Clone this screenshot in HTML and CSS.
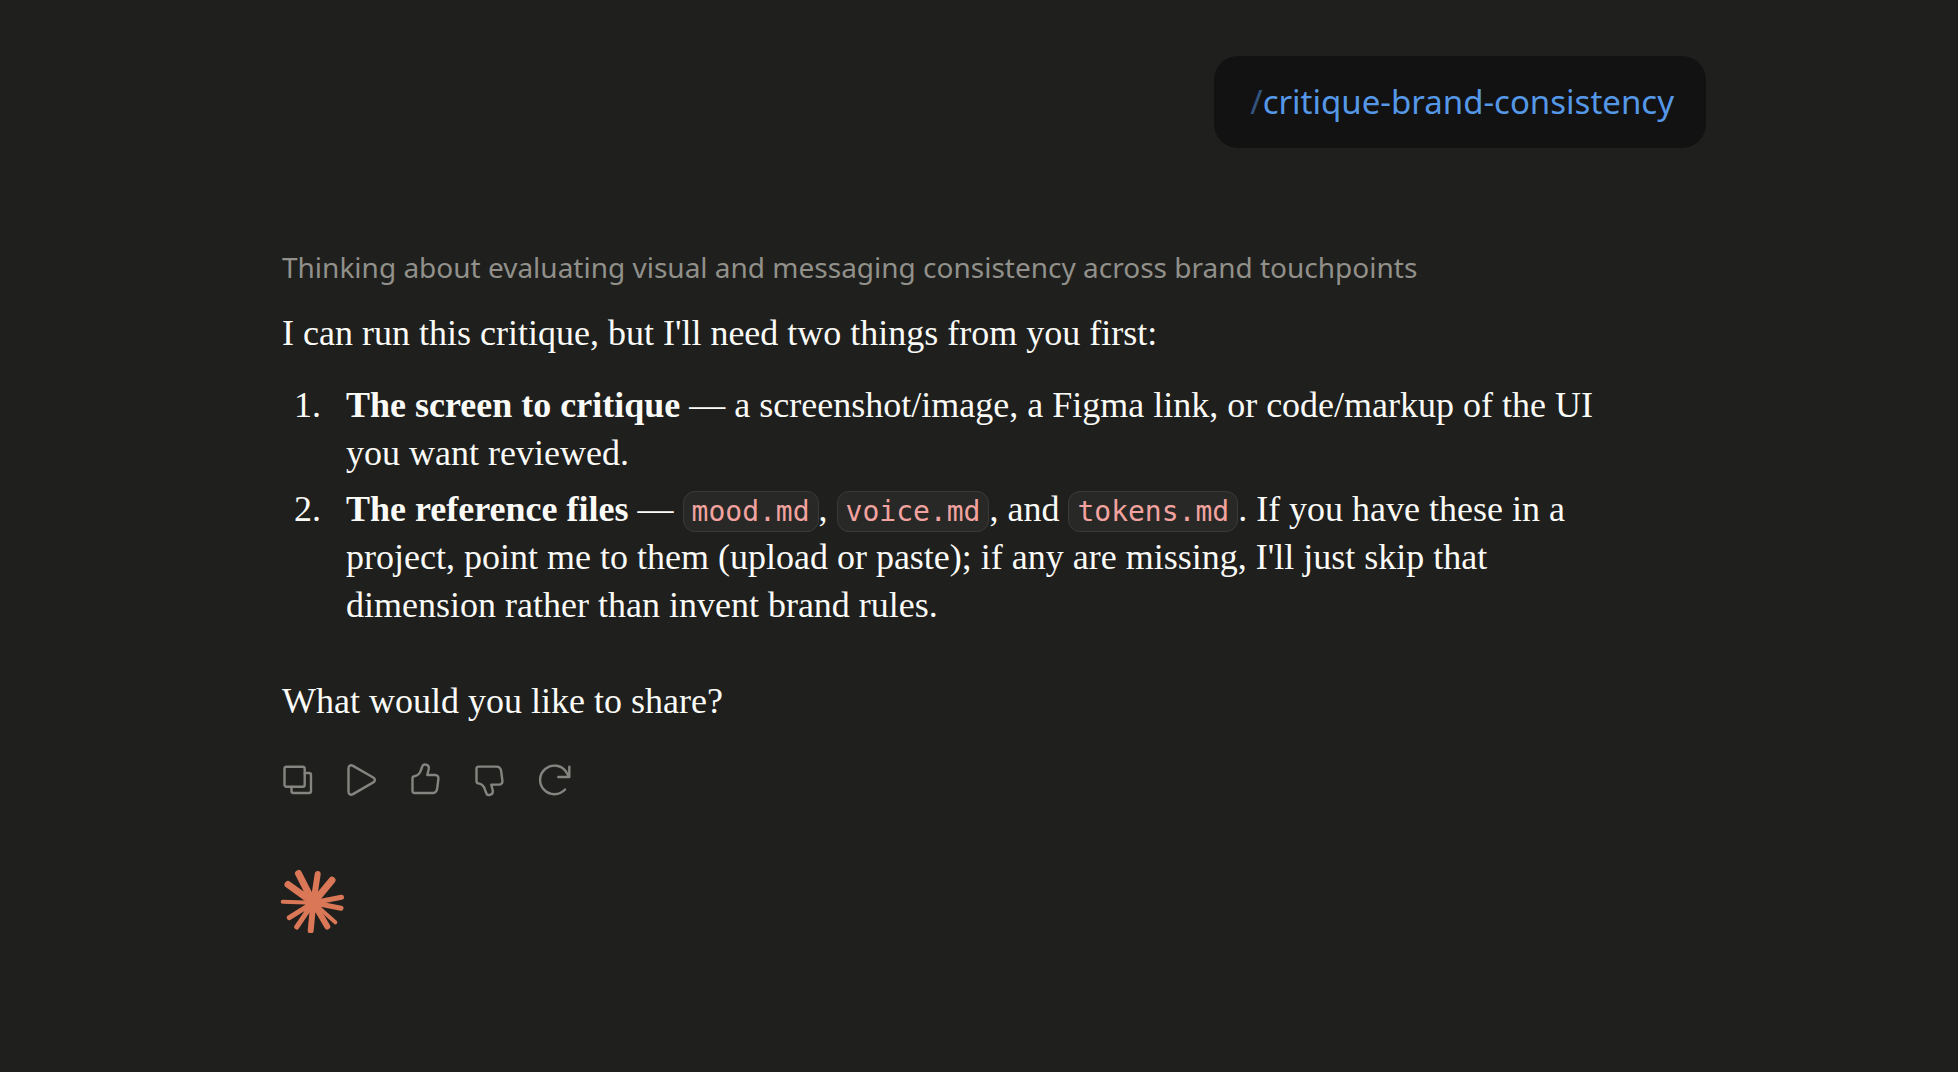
FILE: index.html
```
<!DOCTYPE html>
<html lang="en">

<head>
    <meta charset="UTF-8">
    <meta name="viewport" content="width=device-width, initial-scale=1.0">
    <title>Critique brand consistency</title>
    <link rel="stylesheet" href="styles.css">
</head>

<body>
    <main class="chat">
        <div class="user-message"><span class="slash">/</span>critique-brand-consistency</div>

        <p class="thinking">Thinking about evaluating visual and messaging consistency across brand touchpoints</p>

        <div class="answer">
            <p>I can run this critique, but I'll need two things from you first:</p>
            <ol>
                <li><strong>The screen to critique</strong> — a screenshot/image, a Figma link, or code/markup of the UI you want reviewed.</li>
                <li><strong>The reference files</strong> — <code>mood.md</code>, <code>voice.md</code>, and <code>tokens.md</code>. If you have these in a project, point me to them (upload or paste); if any are missing, I'll just skip that dimension rather than invent brand rules.</li>
            </ol>
            <p>What would you like to share?</p>
        </div>

        <div class="actions">
            <button class="action" aria-label="Copy">
                <svg viewBox="0 0 32 32"><rect x="2.500" y="3.700" width="20.200" height="20" rx="2"/><path d="M22.700 10H27a2 2 0 0 1 2 2v16a2 2 0 0 1-2 2H11.500a2 2 0 0 1-2-2v-4.300"/></svg>
            </button>
            <button class="action" aria-label="Read aloud">
                <svg viewBox="0 0 32 32"><path d="M2.500 5.300v23.400c0 2.600 2.300 3.700 4.500 2.400l20.300-11.700c2.100-1.200 2.100-3.700 0-4.900L7 2.900C4.800 1.600 2.500 2.700 2.500 5.300z"/></svg>
            </button>
            <button class="action" aria-label="Good response">
                <svg viewBox="0 0 32 32"><path d="M2.500 15.300c0-1.200.6-1.900 1.800-2.100 3.700-.6 5.600-2.500 6.700-6.200l1.200-3.400c.6-1.800 2-2.400 3.800-1.900 2.200.6 3.200 2.200 2.700 4.600L17.300 12H25c2.400 0 3.700 1.600 3.400 3.900l-1.200 9.400c-.4 3-2 4.700-4.700 4.700H4.500c-1.300 0-2-.7-2-2z"/></svg>
            </button>
            <button class="action" aria-label="Bad response">
                <svg viewBox="0 0 32 32"><path d="M2.500 18.300c0 1.200.6 1.900 1.800 2.100 3.700.6 5.600 2.500 6.700 6.200l1.200 3.400c.6 1.800 2 2.400 3.800 1.900 2.200-.6 3.200-2.200 2.700-4.600L17.300 21.600H25c2.400 0 3.700-1.600 3.400-3.900L27.200 8.300c-.4-3-2-4.700-4.700-4.700H4.500c-1.300 0-2 .7-2 2z"/></svg>
            </button>
            <button class="action" aria-label="Retry">
                <svg viewBox="0 0 32 32"><path d="M31.300 3.600V14H20.300M31 14L28.300 9A14.300 14.300 0 1 0 27 26.500"/></svg>
            </button>
        </div>

        <svg class="logo" viewBox="0 0 64 64" aria-hidden="true">
            <circle cx="31.300" cy="33.700" r="8"/>
            <path stroke-width="7" d="M31.300 33.700L16.500 4.500M31.300 33.700L50 11.300M31.300 33.700L6 15.500"/>
            <path stroke-width="6" d="M31.300 33.700L35.700 5M31.300 33.700L45.300 57.500M31.300 33.700L28.700 61.500"/>
            <path stroke-width="5" d="M31.300 33.700L59.500 28.300M31.300 33.700L59 39.300M31.300 33.700L14.700 58M31.300 33.700L7.300 48.700"/>
            <path stroke-width="4" d="M31.300 33.700L53.300 53.300M31.300 33.700L.7 32.700"/>
        </svg>
    </main>
</body>

</html>
```

FILE: styles.css
```
body {
    margin: 0;
    background-color: #1f1f1d;
    color: #fafaf7;
    font-family: "Liberation Serif", serif;
}

.chat {
    display: flex;
    flex-direction: column;
    align-items: flex-start;
    max-width: 1424px;
    margin: 0 auto;
    padding: 56px 0 0 30px;
}

.user-message {
    align-self: flex-end;
    padding: 22px 32px 22px 36px;
    border-radius: 24px;
    background-color: #121212;
    color: #5598e7;
    font-family: "Noto Sans", sans-serif;
    font-size: 33px;
    line-height: 48px;
}

.slash {
    opacity: 0.5;
}

.thinking {
    margin: 99px 0 0;
    color: #91908a;
    font-family: "Noto Sans", sans-serif;
    font-size: 28px;
    line-height: 40px;
}

.answer {
    max-width: 1320px;
    margin-top: 22px;
    font-size: 36px;
    line-height: 48px;
}

.answer p {
    margin: 0;
}

.answer ol {
    margin: 24px 0 48px;
    padding-left: 48px;
}

.answer li {
    padding-left: 16px;
}

.answer li + li {
    margin-top: 8px;
}

.answer code {
    padding: 3px 8px;
    border: 1px solid #3a3a38;
    border-radius: 12px;
    background-color: #282826;
    color: #f2a3a0;
    font-family: "DejaVu Sans Mono", monospace;
    font-size: 28px;
    line-height: 1;
}

.actions {
    display: flex;
    gap: 32px;
    margin-top: 38px;
}

.action {
    width: 32px;
    height: 32px;
    padding: 0;
    border: none;
    background: none;
    cursor: pointer;
}

.action svg {
    display: block;
    overflow: visible;
    fill: none;
    stroke: #858480;
    stroke-width: 2.4;
    stroke-linecap: round;
    stroke-linejoin: round;
}

.logo {
    width: 64px;
    height: 64px;
    margin-top: 74px;
    overflow: visible;
    fill: #d97757;
    stroke: #d97757;
    stroke-linecap: round;
}
```
